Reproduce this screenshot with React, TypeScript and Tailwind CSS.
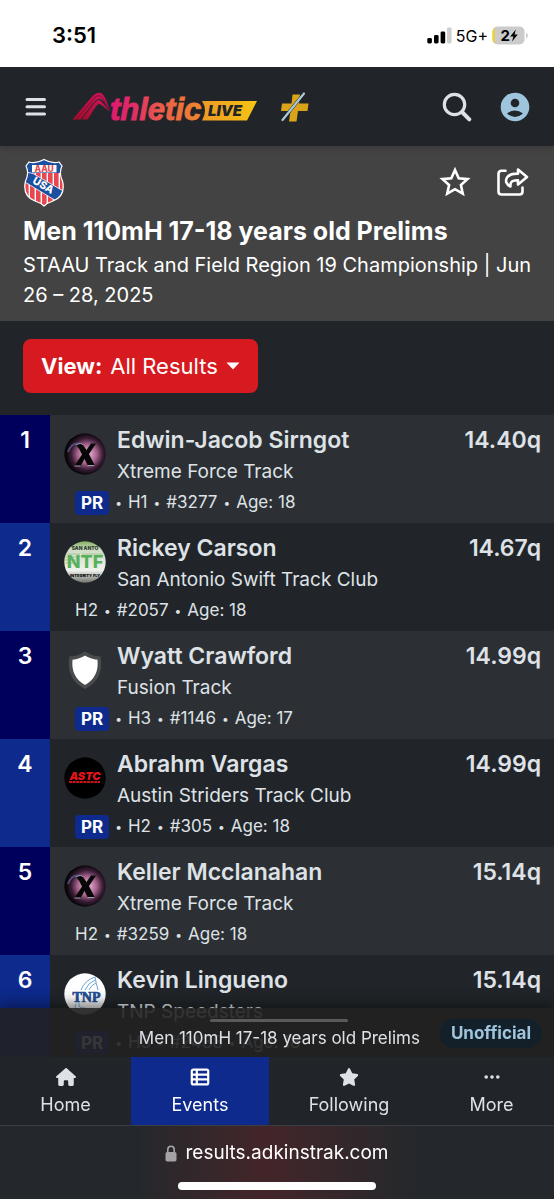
import React, { useState } from 'react';
import { FaHouse, FaStar } from 'react-icons/fa6';

type Team = 'xtreme' | 'swift' | 'none' | 'astc' | 'tnp';

type Result = {
  place: number;
  name: string;
  team: string;
  logo: Team;
  pr: boolean;
  info: string[];
  mark: string;
};

const RESULTS: Result[] = [
  { place: 1, name: 'Edwin-Jacob Sirngot', team: 'Xtreme Force Track', logo: 'xtreme', pr: true, info: ['H1', '#3277', 'Age: 18'], mark: '14.40q' },
  { place: 2, name: 'Rickey Carson', team: 'San Antonio Swift Track Club', logo: 'swift', pr: false, info: ['H2', '#2057', 'Age: 18'], mark: '14.67q' },
  { place: 3, name: 'Wyatt Crawford', team: 'Fusion Track', logo: 'none', pr: true, info: ['H3', '#1146', 'Age: 17'], mark: '14.99q' },
  { place: 4, name: 'Abrahm Vargas', team: 'Austin Striders Track Club', logo: 'astc', pr: true, info: ['H2', '#305', 'Age: 18'], mark: '14.99q' },
  { place: 5, name: 'Keller Mcclanahan', team: 'Xtreme Force Track', logo: 'xtreme', pr: false, info: ['H2', '#3259', 'Age: 18'], mark: '15.14q' },
  { place: 6, name: 'Kevin Lingueno', team: 'TNP Speedsters', logo: 'tnp', pr: true, info: ['H3', '#2438', 'Age: 18'], mark: '15.14q' },
];

function StatusBar() {
  return (
    <div className="flex h-[67px] items-center justify-between bg-white pr-[26px] pl-[52px] pt-1 text-black">
      <span className="text-[22px] font-semibold">3:51</span>
      <div className="flex items-center gap-1">
        <svg width="25" height="17" viewBox="0 0 25 17" aria-hidden="true">
          <rect x="0.3" y="11" width="4.6" height="5.5" rx="1.4" />
          <rect x="7" y="8" width="4.6" height="8.5" rx="1.4" />
          <rect x="13.6" y="4.5" width="4.6" height="12" rx="1.4" />
          <rect x="20" y="0.5" width="4.6" height="16" rx="1.4" fill="#cfcfcf" />
        </svg>
        <span className="text-base">5G+</span>
        <svg width="36" height="19" viewBox="0 0 36 19" aria-hidden="true">
          <rect x="0.5" y="0.5" width="32" height="18" rx="5" fill="#cbcbcb" />
          <path d="M2.6 1.8 A5 5 0 0 0 .5 5.5 V13.5 A5 5 0 0 0 2.6 17.2 Z" fill="#f1d21f" />
          <path d="M34 6.5 Q35.8 7.5 35.8 9.5 T34 12.5 Z" fill="#cbcbcb" />
          <text x="8.5" y="15" fontSize="15" fontWeight="700">2</text>
          <path d="M23.8 3.6 L18.2 10.4 H21.4 L20 15.4 L25.8 8.6 H22.6 Z" />
        </svg>
      </div>
    </div>
  );
}

function AthleticLogo() {
  return (
    <svg width="188" height="34" viewBox="0 0 188 34" role="img" aria-label="AthleticLIVE">
      <defs>
        <linearGradient id="word" gradientUnits="userSpaceOnUse" x1="38" x2="130" y1="0" y2="0">
          <stop offset="0" stopColor="#e0196e" />
          <stop offset="0.25" stopColor="#df2c68" />
          <stop offset="0.55" stopColor="#ea5b4b" />
          <stop offset="1" stopColor="#ee8a2c" />
        </linearGradient>
        <linearGradient id="live" x1="0" x2="1" y1="0" y2="0">
          <stop offset="0" stopColor="#ec9a25" />
          <stop offset="1" stopColor="#f7c412" />
        </linearGradient>
        <linearGradient id="track" x1="0" x2="1" y1="1" y2="0">
          <stop offset="0" stopColor="#a30d2e" />
          <stop offset="1" stopColor="#d0145a" />
        </linearGradient>
      </defs>
      <path d="M0.5 29.5 L21 5.5 Q25 1.5 29.500 3.2 Q33 5 38 21 L35 17 Q31 8.500 27 9 Q24 9.500 20.500 14 L8.5 29.5 Z" fill="url(#track)" />
      <path d="M9.500 29.5 L22.500 12.800 Q26 8.500 29 11 Q33 15 37.500 22 Q31 15.5 27.5 14 Q25.500 14 23.500 17 L15.500 29.5 Z" fill="url(#track)" />
      <path d="M4.500 29.5 L23 7.200 Q27.500 3.5 31 8.500 Q34 13.500 37 20" fill="none" stroke="#6e1030" strokeWidth="0.8" />
      <text x="38" y="29.5" fontSize="31" fontWeight="700" fontStyle="italic" fill="url(#word)" stroke="url(#word)" strokeWidth="0.9" fontFamily="Liberation Sans, sans-serif">thletic</text>
      <path d="M130 11 H185 L175 30.5 H130 Q136 20 130 11 Z" fill="url(#live)" />
      <text x="136" y="26" fontSize="15" fontWeight="900" fontStyle="italic" fill="#212529" fontFamily="Inter, sans-serif">LIVE</text>
    </svg>
  );
}

const SHIELD = 'M21 1.5 Q29 6 36 4 L39 8 Q35.5 15 39.5 23 Q43 38 30 43 Q24 45 21 48 Q18 45 12 43 Q-1 38 2.5 23 Q6.5 15 3 8 L6 4 Q13 6 21 1.5 Z';

function AauLogo() {
  return (
    <svg width="42" height="50" viewBox="0 0 42 50" role="img" aria-label="AAU USA">
      <defs>
        <clipPath id="shield">
          <path d={SHIELD} />
        </clipPath>
      </defs>
      <g clipPath="url(#shield)">
        <rect width="42" height="50" fill="#fff" />
        {[1, 7, 13, 19, 25, 31, 37].map((x) => (
          <rect key={x} x={x} y="15" width="4.6" height="35" fill="#e8474f" />
        ))}
        <rect width="42" height="15" fill="#1b4f9f" />
        <path d="M3 14 L10 15.5 L42 34 L35 44 L1 23.5 Z" fill="#1b4f9f" stroke="#fff" strokeWidth="0.8" />
        <rect x="9" y="7" width="24.5" height="7.4" fill="#fff" />
      </g>
      <path d={SHIELD} fill="none" stroke="#fff" strokeWidth="1.2" />
      <text x="21.2" y="13.6" textAnchor="middle" fontSize="8.5" fontWeight="800" fill="#e8474f">AAU</text>
      <text x="20.5" y="31" textAnchor="middle" fontSize="10.5" fontWeight="800" fill="#fff" transform="rotate(30 20.5 27)">USA</text>
    </svg>
  );
}

function TeamLogo({ team }: { team: Team }) {
  if (team === 'none') {
    return (
      <svg width="42" height="42" viewBox="0 0 42 42" aria-hidden="true">
        <path d="M21 4.5 Q28 9 35 9 Q38 29 21 38 Q4 29 7 9 Q14 9 21 4.5 Z" fill="#fff" stroke="#4a4b4d" strokeWidth="3.5" />
      </svg>
    );
  }
  return (
    <svg width="42" height="42" viewBox="0 0 42 42" aria-hidden="true">
      <defs>
        <clipPath id="round"><circle cx="21" cy="21" r="20.7" /></clipPath>
        <radialGradient id="glow" cx="0.55" cy="0.5" r="0.5">
          <stop offset="0" stopColor="#f3c3e0" />
          <stop offset="0.45" stopColor="#a8648f" />
          <stop offset="0.75" stopColor="#3a1d35" />
          <stop offset="1" stopColor="#08060a" />
        </radialGradient>
        <linearGradient id="swift" x1="0" x2="0" y1="0" y2="1">
          <stop offset="0" stopColor="#7fae5c" />
          <stop offset="0.2" stopColor="#cfdcc6" />
          <stop offset="0.7" stopColor="#eef1ec" />
          <stop offset="1" stopColor="#6d726b" />
        </linearGradient>
        <linearGradient id="white" x1="0" x2="0" y1="0" y2="1">
          <stop offset="0.6" stopColor="#fff" />
          <stop offset="1" stopColor="#b9b9b9" />
        </linearGradient>
      </defs>
      <g clipPath="url(#round)">
        {team === 'xtreme' && (
          <>
            <rect width="42" height="42" fill="url(#glow)" />
            <path d="M4 19 Q8 8 18 11" stroke="#54527c" strokeWidth="1.6" fill="none" />
            <path d="M12 12 Q17 9 19 12 L22.5 17 L27 10.5 H32 L25 21 L30.5 32 H23.5 L20.5 26 L16.5 33 H10.5 L18 21.5 L15 15.5 Z" fill="#070707" />
            <path d="M12 12 Q17 9 19 12 M10.5 33 H16.5 M23.5 32.5 H30" stroke="#a79bb0" strokeWidth="1" fill="none" />
          </>
        )}
        {team === 'swift' && (
          <>
            <rect width="42" height="42" fill="url(#swift)" />
            <text x="21" y="9" textAnchor="middle" fontSize="5" fontWeight="800" fill="#26351f">SAN ANTO</text>
            <path d="M0 13 H16 M0 16 H14 M0 19 H12 M0 22 H10 M18 13 H42" stroke="#a5c493" strokeWidth="1" />
            <text x="21" y="26.5" textAnchor="middle" fontSize="18" fontWeight="800" fill="#58b15a">NTF</text>
            <text x="21" y="35.5" textAnchor="middle" fontSize="4" fontWeight="900" fill="#111">INTEGRITY FLY</text>
          </>
        )}
        {team === 'astc' && (
          <>
            <rect width="42" height="42" fill="#000" />
            <text x="21" y="22.5" textAnchor="middle" fontSize="11" fontWeight="900" fontStyle="italic" fill="#e5141c">ASTC</text>
            <path d="M5 25 H36" stroke="#c9141b" strokeWidth="1.8" strokeDasharray="3 0.6" />
          </>
        )}
        {team === 'tnp' && (
          <>
            <rect width="42" height="42" fill="url(#white)" />
            <path d="M17 17 Q21 7 31 4 Q32 10 34 17 M21 17 Q24 10 31 7 M25 17 Q27 12 32 10 M12 31 Q9 36 16 38 M15 30 Q14 36 21 35" stroke="#6fa3d4" strokeWidth="1" fill="none" />
            <text x="22.5" y="28.5" textAnchor="middle" fontSize="14" fontWeight="700" fill="#1f4f94" stroke="#1f4f94" strokeWidth="0.7" fontFamily="Liberation Serif, serif">TNP</text>
          </>
        )}
      </g>
    </svg>
  );
}

function Header() {
  return (
    <header className="relative z-10 flex h-[79px] items-center bg-[#212529] pr-6 pl-6 shadow-md">
      <button type="button" aria-label="Menu" className="text-[#dee2e6]">
        <svg width="24" height="20" viewBox="0 0 24 20" fill="none" stroke="currentColor" strokeWidth="3" strokeLinecap="round">
          <path d="M3 2.5 H20.5 M3 9.7 H20.5 M3 17 H20.5" />
        </svg>
      </button>
      <a href="#home" className="ml-6">
        <AthleticLogo />
      </a>
      <a href="#plus" aria-label="Plus" className="ml-5">
        <svg width="30" height="32" viewBox="0 0 30 32">
          <path d="M12.5 3.5 H20 L19 12.5 H28.5 L27.5 20 H18 L16.5 30.5 H9 L10.5 20 H1 L2 12.5 H11.5 Z" fill="#d9a31a" />
          <path d="M24 2.5 L2.5 29" stroke="#212529" strokeWidth="3" />
          <path d="M24 2.5 L2.5 29" stroke="#a9c9da" strokeWidth="2.2" strokeLinecap="round" />
        </svg>
      </a>
      <div className="ml-auto flex items-center gap-7">
        <button type="button" aria-label="Search" className="text-[#dee2e6]">
          <svg width="30" height="30" viewBox="0 0 30 30" fill="none" stroke="currentColor" strokeLinecap="round">
            <circle cx="12.5" cy="12.5" r="10.2" strokeWidth="3.2" />
            <path d="M20.5 20.5 L27.3 27.3" strokeWidth="4" />
          </svg>
        </button>
        <button type="button" aria-label="Account" className="text-[#9fc5dc]">
          <svg width="30" height="30" viewBox="0 0 30 30">
            <circle cx="15" cy="15" r="14.3" fill="currentColor" />
            <circle cx="15" cy="11" r="4.3" fill="#212529" />
            <path d="M7 21.5 Q15 15.5 23 21.5 Q15 28.500 7 21.5 Z" fill="#212529" />
          </svg>
        </button>
      </div>
    </header>
  );
}

function EventHeader() {
  return (
    <section className="bg-[#434343] pt-3 pr-4 pb-[11px] pl-[23px] text-white">
      <div className="flex items-start justify-between pr-[9px]">
        <AauLogo />
        <div className="flex items-center gap-6 pt-2">
          <button type="button" aria-label="Follow">
            <svg width="32" height="32" viewBox="0 0 32 32" fill="none" stroke="currentColor" strokeWidth="2.6">
              <path d="M16 4 L19.7 12.2 L28.5 13.1 L21.9 19 L23.8 27.7 L16 23.2 L8.2 27.7 L10.1 19 L3.5 13.1 L12.3 12.2 Z" />
            </svg>
          </button>
          <button type="button" aria-label="Share">
            <svg width="34" height="32" viewBox="0 0 34 32" fill="none" stroke="currentColor" strokeWidth="2.6" strokeLinejoin="round" strokeLinecap="round">
              <path d="M10.5 4.800 H6.5 Q3.5 4.800 3.5 7.8 V25.5 Q3.5 28.5 6.5 28.5 H24.5 Q27.5 28.5 27.5 25.5 V21.5" />
              <path d="M23 3.6 L32 11 L23 18.5 V14.2 Q14.500 13.800 15.500 20.500 Q9 17 12 11.500 Q15 7.400 23 7.6 Z" />
            </svg>
          </button>
        </div>
      </div>
      <h1 className="mt-2 text-[25px] leading-[30px] font-bold">Men 110mH 17-18 years old Prelims</h1>
      <p className="mt-1 text-xl leading-[30px]">STAAU Track and Field Region 19 Championship | Jun 26 – 28, 2025</p>
    </section>
  );
}

function ViewPicker() {
  const [view, setView] = useState('All Results');
  return (
    <div className="flex px-[23px] pt-[18px] pb-[22px]">
      <label className="relative inline-flex h-[54px] items-center gap-2 rounded-lg bg-[#d71920] pl-[18px] text-[22px] text-white">
        <span className="font-bold">View:</span>
        <select
          value={view}
          onChange={(e) => setView(e.target.value)}
          className="h-full cursor-pointer appearance-none bg-transparent pr-10 outline-none"
        >
          <option className="text-black">All Results</option>
        </select>
        <svg width="14" height="8" viewBox="0 0 14 8" className="pointer-events-none absolute right-[18px]" aria-hidden="true">
          <path d="M0.5 0.5 H13.5 L7 7.5 Z" fill="currentColor" />
        </svg>
      </label>
    </div>
  );
}

function ResultRow({ result }: { result: Result }) {
  return (
    <li className="group flex h-[108px] odd:bg-[#2c3034] even:bg-[#212529]">
      <div className="w-[50px] shrink-0 pt-[9px] text-center text-[23px] leading-8 font-semibold text-white group-odd:bg-[#00005c] group-even:bg-[#0d2a8c]">
        {result.place}
      </div>
      <div className="min-w-0 flex-1 pt-[9px] pr-[13px] pl-[14px]">
        <div className="flex gap-[11px]">
          <div className="shrink-0 pt-[9px]">
            <TeamLogo team={result.logo} />
          </div>
          <div className="min-w-0 flex-1">
            <div className="flex justify-between text-[23px] leading-8 font-semibold">
              <h2>{result.name}</h2>
              <span>{result.mark}</span>
            </div>
            <p className="text-[19px] leading-8">{result.team}</p>
          </div>
        </div>
        <div className="flex h-[30px] items-center gap-[6px] pl-[11px] text-[17px]">
          {result.pr && (
            <>
              <span className="rounded bg-[#0d2a8c] px-[6px] leading-6 font-bold text-white">PR</span>
              <span className="text-xs">•</span>
            </>
          )}
          {result.info.map((item, i) => (
            <React.Fragment key={item}>
              {i > 0 && <span className="text-xs">•</span>}
              <span>{item}</span>
            </React.Fragment>
          ))}
        </div>
      </div>
    </li>
  );
}

function BottomBar() {
  return (
    <div className="fixed inset-x-0 bottom-0 text-[#dee2e6]">
      <div className="flex h-[49px] justify-end bg-[#212121]/90 pr-3 shadow-[0_-6px_12px_rgba(0,0,0,0.35)]">
        <div className="mr-5 flex flex-col items-center">
          <span className="mt-[11px] h-[3px] w-[138px] rounded-full bg-[#5a5a5c]" />
          <span className="mt-1 text-[17px] leading-6">Men 110mH 17-18 years old Prelims</span>
        </div>
        <span className="mt-[11px] h-[29px] rounded-full bg-[#13202a] px-[11px] text-[17px] leading-7 font-bold text-[#9fc5dc]">Unofficial</span>
      </div>
      <nav className="flex h-[68px] bg-[#212529] text-lg leading-6">
        <a href="#home" className="flex w-[131px] flex-col items-center gap-[6px] pt-[10px]">
          <FaHouse size={20} />
          <span>Home</span>
        </a>
        <a href="#events" className="flex w-[138px] flex-col items-center gap-[6px] bg-[#0d2a8c] pt-[10px] text-white">
          <svg width="20" height="20" viewBox="0 0 20 20" fill="none" stroke="currentColor" strokeWidth="2.2">
            <rect x="1.8" y="2.6" width="16.4" height="14.8" rx="1.5" />
            <path d="M2 7.6 H18 M2 12.4 H18 M6.8 3 V17" />
          </svg>
          <span>Events</span>
        </a>
        <a href="#following" className="flex flex-1 flex-col items-center gap-[6px] pt-[10px]">
          <FaStar size={20} />
          <span>Following</span>
        </a>
        <a href="#more" className="flex w-[125px] flex-col items-center gap-[6px] pt-[10px]">
          <svg width="20" height="20" viewBox="0 0 20 20" fill="currentColor">
            <circle cx="4.2" cy="10" r="1.8" />
            <circle cx="10" cy="10" r="1.8" />
            <circle cx="15.8" cy="10" r="1.8" />
          </svg>
          <span>More</span>
        </a>
      </nav>
      <div className="flex h-[74px] flex-col items-center border-t border-[#3a3d41] bg-linear-to-r from-[#24282c] from-25% via-[#432529] via-48% to-[#24282c] to-75% pt-3 text-white">
        <div className="flex items-center gap-2 text-[19px] leading-[30px]">
          <svg width="12" height="17" viewBox="0 0 12 17" aria-hidden="true">
            <rect x="0.5" y="7" width="11" height="9.5" rx="1.8" fill="#a5a3a6" />
            <path d="M2.8 8 V4.5 Q2.8 1.2 6 1.2 T9.2 4.5 V8" fill="none" stroke="#a5a3a6" strokeWidth="1.6" />
          </svg>
          results.adkinstrak.com
        </div>
        <div className="mt-[14px] h-2 w-[198px] rounded-full bg-white" />
      </div>
    </div>
  );
}

export default function App() {
  return (
    <div className="min-h-screen bg-[#212529] pb-[136px] font-[Inter,'Liberation_Sans',sans-serif] text-[#dee2e6]">
      <StatusBar />
      <Header />
      <main>
        <EventHeader />
        <ViewPicker />
        <ol>
          {RESULTS.map((result) => (
            <ResultRow key={result.place} result={result} />
          ))}
        </ol>
      </main>
      <BottomBar />
    </div>
  );
}
